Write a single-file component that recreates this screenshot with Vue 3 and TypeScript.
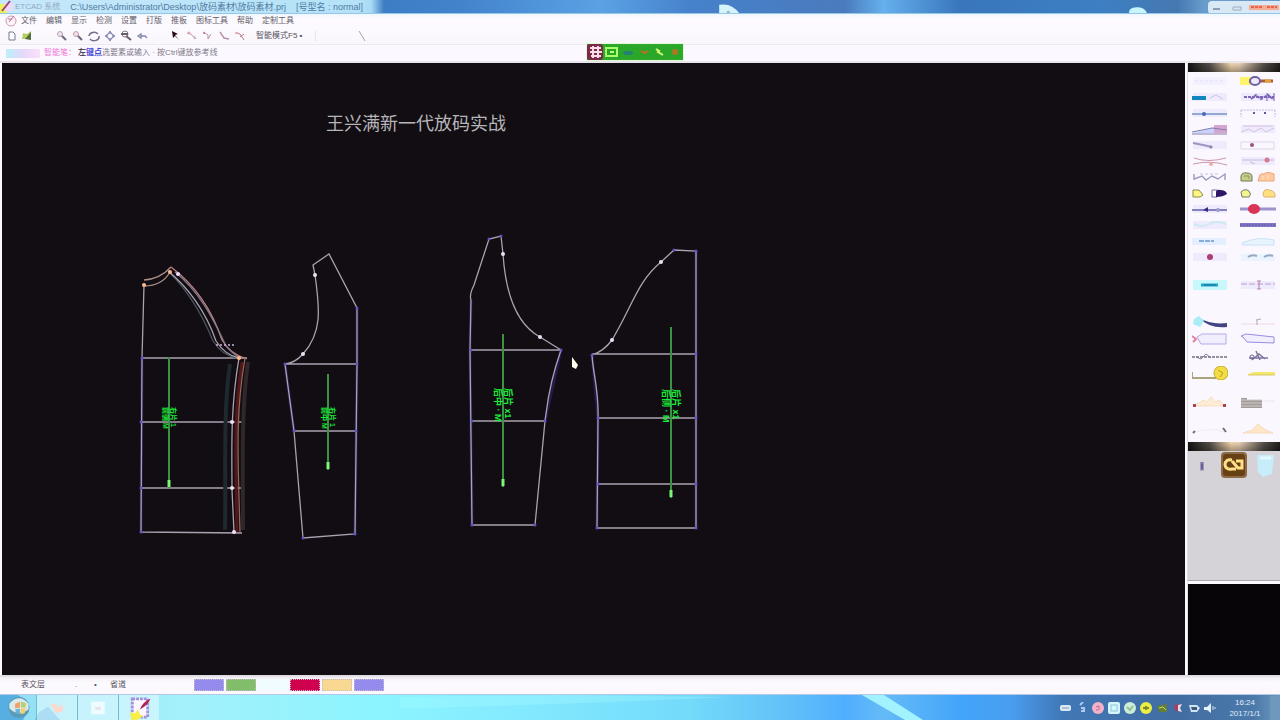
<script setup lang="ts">
interface Item { label: string; art: string }

const menus: string[] = ['文件', '编辑', '显示', '检测', '设置', '打版', '推板', '图标工具', '帮助', '定制工具']

const fileTools: Item[] = [
  { label: '新建', art: '<path d="M3 2h4l2 2v6H3z" fill="#fff" stroke="#77798f"/>' },
  { label: '打开', art: '<path d="M1 9l1-6 4 1 4-3v8z" fill="#b5cf62"/><path d="M4 9l6-7v8z" fill="#526c3c"/>' },
]
const viewTools: Item[] = [
  { label: '放大', art: '<path d="M5 5l5 5" stroke="#6b6a76" stroke-width="2"/><circle cx="4" cy="4" r="2.5" fill="#eee4ec" stroke="#b7a5b5"/>' },
  { label: '缩小', art: '<path d="M5 5l5 5" stroke="#68687c" stroke-width="2"/><circle cx="4" cy="4" r="2.5" fill="#f6dfe4" stroke="#c5a0aa"/>' },
  { label: '刷新', art: '<path d="M1 6a5 4 0 0 1 9-2M11 6a5 4 0 0 1-9 3" fill="none" stroke="#72708a" stroke-width="1.5"/>' },
  { label: '平移', art: '<path d="M6 1l2 3-2-1-2 1zM6 11l2-3-2 1-2-1zM1 6l3-2-1 2 1 2zM11 6L8 4l1 2-1 2z" fill="#8a8eb8" stroke="#8a8eb8"/>' },
  { label: '全屏', art: '<circle cx="5" cy="4" r="3" fill="none" stroke="#85818e"/><path d="M1 4h7M6 6l5 4" stroke="#6d5d6a" stroke-width="2"/>' },
  { label: '撤销', art: '<path d="M2 6l3-2v4zM5 6h4l2 2" fill="none" stroke="#7c84ab" stroke-width="1.3"/>' },
]
const editTools: Item[] = [
  { label: '选择', art: '<path d="M2 1l6 3-3 1 4 5-4-4-2 2z" fill="#2a0718"/>' },
  { label: '点捕捉', art: '<path d="M1 3l4 1 4 5M8 6l2 3" stroke="#b3a3b6" fill="none"/><circle cx="3" cy="3" r="1.5" fill="#e5a8aa"/>' },
  { label: '线捕捉', art: '<path d="M1 2l5 3M6 5v4l3-5" stroke="#b998ac" fill="none"/><circle cx="2" cy="3" r="1" fill="#dc6d89"/>' },
  { label: '裁剪', art: '<path d="M2 2l4 6 5 1" stroke="#b892a8" fill="none" stroke-width="1.4"/>' },
  { label: '移动', art: '<path d="M1 3l5 1 4 6M6 7l4-3" stroke="#b57c8b" fill="none"/><circle cx="3" cy="3" r="1.3" fill="#edabb3"/>' },
]

const haze = '<rect x="1" y="3" width="34" height="8" fill="#eeebfd"/>'
const wave = haze + '<path d="M1 10l8-3 5 3 7-4 5 4 8-4M3 4h30" stroke="#d8bfe2" fill="none"/>'
const groupA: Item[] = [
  { label: '任意文字', art: '<rect x="1" y="3" width="34" height="8" fill="#f4f1fe"/><path d="M3 7h30" stroke="#e4dff7" stroke-dasharray="3 2"/>' },
  { label: '修正', art: '<path d="M0 3h13v8H0z" fill="#fff36a"/><path d="M9 7h24" stroke="#a75b41" stroke-width="3"/><path d="M25 7h6" stroke="#e4a332" stroke-width="3"/><ellipse cx="15" cy="7" rx="5" ry="4" fill="#eee9ff" stroke="#6960a2" stroke-width="2"/>' },
  { label: '点打断', art: haze + '<path d="M0 8h14" stroke="#1187bd" stroke-width="4"/><path d="M18 8l6-3 7 4" fill="none" stroke="#d3c0e4"/>' },
  { label: '平行线', art: haze + '<path d="M4 7h30M11 9l5-4 5 4 7-4 5 4" fill="none" stroke="#7d66b8" stroke-width="2" stroke-dasharray="3 1"/><path d="M27 3v8M34 3v8" stroke="#7959b5"/>' },
  { label: '等分线', art: haze + '<path d="M0 8h35" stroke="#94a8d6" stroke-width="2"/><circle cx="12" cy="8" r="2" fill="#4169b5"/>' },
  { label: '等分点', art: '<path d="M1 4h34M1 4v7M35 4v7" stroke="#c4b6df" stroke-dasharray="2 1"/><path d="M13 7h2M24 7h2" stroke="#61579b" stroke-width="2"/>' },
  { label: '角度线', art: '<path d="M0 11L22 5v6z" fill="#cad2fc"/><path d="M22 3h13v8H22z" fill="#d4a6cf"/><path d="M0 10l20-4 15 2M0 12h35" stroke="#857cae" fill="none"/>' },
  { label: '波浪线', art: wave },
  { label: '曲线', art: haze + '<path d="M1 5l10 2 9 2" stroke="#a095c2" fill="none" stroke-width="2"/><circle cx="19" cy="9" r="1.5" fill="#987cad"/>' },
  { label: '点', art: '<path d="M1 4h33v7H1z" fill="none" stroke="#e0d5ef"/><circle cx="12" cy="7" r="2" fill="#96557e"/>' },
  { label: '圆角', art: '<path d="M2 4q14 5 32 0M1 10q18-4 34 1" fill="none" stroke="#ca97ad"/><circle cx="19" cy="10" r="2" fill="#efaaa8"/>' },
  { label: '对称', art: haze + '<path d="M2 6h32M10 8l5 2" stroke="#c9b7d6"/><circle cx="27" cy="6" r="2.5" fill="#d97894"/>' },
  { label: '多段线', art: '<path d="M2 4v6M2 9l8-3 4 4 6-4 6 3 7-5v6" fill="none" stroke="#9d9bc0" stroke-width="1.4"/><path d="M8 4h20" stroke="#c4c2de" stroke-dasharray="3 2"/>' },
  { label: '转换', art: '<path d="M1 6q1-4 6-3 5 0 5 4v4H1z" fill="#c6ce85" stroke="#71785e"/><path d="M4 6h5v3" fill="none" stroke="#8b9270"/><path d="M19 8q0-5 5-4 3-3 10 0v7H18z" fill="#ffc99c" stroke="#eaa583"/><path d="M23 6v4M28 5v5" stroke="#ffe5cd"/>' },
  { label: '复制', art: '<path d="M1 4h6l4 5-3 2H1z" fill="#fff681" stroke="#8c8951"/><path d="M20 4h5v7h-5z" fill="#fff" stroke="#726ca0"/><path d="M24 7q0-4 4-3 6 0 7 4-4 3-11 3z" fill="#2e1766"/>' },
  { label: '镜像', art: '<path d="M1 6q4-4 8-1 3 3 0 6H2z" fill="#f3f48f" stroke="#777a66"/><path d="M23 8q1-6 6-4 7 1 6 7H24z" fill="#ffe07e" stroke="#ddb26c"/>' },
  { label: '长度', art: haze + '<path d="M0 8h35" stroke="#8582c2" stroke-width="2"/><path d="M11 8l5-3v5z" fill="#392a82"/><circle cx="26" cy="8" r="2" fill="#9c9bc7"/>' },
  { label: '标记', art: '<path d="M0 7h36" stroke="#9f93cf" stroke-width="3"/><ellipse cx="14" cy="7" rx="6" ry="5" fill="#da3456"/>' },
  { label: '剪开', art: haze + '<path d="M2 6q8 4 15 0t17 0" stroke="#cdeaf1" fill="none" stroke-width="2"/>' },
  { label: '测量', art: '<rect x="0" y="5" width="36" height="4" fill="#8078c6"/><path d="M0 7h36" stroke="#6256a1" stroke-dasharray="2 1"/>' },
  { label: '纱向', art: '<rect y="4" width="34" height="7" fill="#e3effe"/><path d="M7 7h15" stroke="#87acd7" stroke-width="2" stroke-dasharray="5 1"/>' },
  { label: '旋转', art: '<path d="M2 9q16-7 32-3v5H2z" fill="#e7f4ff" stroke="#c9e3f4"/>' },
  { label: '打孔', art: haze + '<circle cx="18" cy="7" r="3" fill="#ad3c77"/>' },
  { label: '拼接', art: '<rect x="1" y="4" width="34" height="7" fill="#eaf3fe"/><path d="M8 7q4-3 9-1M24 7q4-3 9-1" fill="none" stroke="#95a9c4" stroke-width="2"/>' },
]
const groupB: Item[] = [
  { label: '缝边', art: '<rect x="1" y="2" width="34" height="10" fill="#c8f8fc"/><path d="M9 7h17" stroke="#21a6cd" stroke-width="3"/><path d="M12 7h12" stroke="#176b98"/>' },
  { label: '拉链', art: haze + '<path d="M1 6h34" stroke="#d5c2e6" stroke-width="2" stroke-dasharray="6 2"/><path d="M17 3h4M19 3v8M17 11h4" stroke="#b37db1"/>' },
]
const groupC: Item[] = [
  { label: '刷子', art: '<path d="M7 3q12 7 28 5v4q-17 2-28-9z" fill="#434583"/><path d="M2 4l5-3 5 5-4 6-7-3z" fill="#a9edf5"/>' },
  { label: '刀口', art: '<path d="M1 9h34" stroke="#efdbe5"/><path d="M16 5l5-1M17 5v5" stroke="#b3a5b6"/>' },
  { label: '前片', art: '<path d="M5 5l5-3h24v10H9z" fill="#f1eefe" stroke="#b4abe6"/><path d="M0 4l4 3-3 3" stroke="#e97f9e" fill="none" stroke-width="2"/>' },
  { label: '后片', art: '<path d="M1 4l5-2 28 3v6l-27-1-4-5z" fill="#f1eefe" stroke="#978ce0"/>' },
  { label: '线型', art: '<path d="M0 8h36" stroke="#9692a0" stroke-width="2" stroke-dasharray="3 1"/><path d="M4 8l5 2 5-5 5 4" fill="none" stroke="#7f7b95"/>' },
  { label: '剪刀', art: '<path d="M9 9h19M16 2l4 9M12 11l7-6 6 5" fill="none" stroke="#7d75a0" stroke-width="1.5"/><circle cx="12" cy="8" r="2" fill="none" stroke="#6e6595"/>' },
  { label: '卷尺', art: '<path d="M0 6v6h24" fill="none" stroke="#a9a47c" stroke-width="2"/><circle cx="29" cy="7" r="7" fill="#f2dd43" stroke="#c4a82e"/><path d="M26 4l5 3-3 4" stroke="#b99d27" fill="none"/>' },
  { label: '直尺', art: '<path d="M8 8l6-2h21v3H9z" fill="#f4e86b"/><path d="M8 9h27" stroke="#d6c968"/>' },
]
const groupD: Item[] = [
  { label: '省道', art: '<path d="M4 8q5-1 7-4l4 2 4-5 4 5 5-2 3 6H4z" fill="#ffecd5" stroke="#f6ddc3"/><path d="M1 8h3v3H1zM31 8h3v3h-3z" fill="#a84652"/>' },
  { label: '表格', art: '<path d="M1 2h6v2h15v8H1z" fill="#a49c9b"/><path d="M1 4h21M1 7h21M1 10h21" stroke="#cfcaca"/><path d="M23 5h12" stroke="#e9e5ea"/>' },
  { label: '展开', art: '<path d="M3 10q15-5 29 0" fill="none" stroke="#f4ebf2"/><path d="M1 11l2-2M31 6l3 4" stroke="#786c80" stroke-width="2"/>' },
  { label: '褶', art: '<path d="M3 11l9-3 6-6 6 5 9 4z" fill="#ffe6c9" stroke="#f5dabd"/>' },
]
const toolGroups = [
  { name: 'a', items: groupA }, { name: 'b', items: groupB },
  { name: 'c', items: groupC }, { name: 'd', items: groupD },
]

const swatches = ['violet', 'green', 'aqua', 'crimson', 'yellow', 'violet']

const trayIcons: Item[] = [
  { label: '键盘', art: '<rect y="3" width="11" height="6" rx="2" fill="#dce9f5"/><path d="M2 6h7" stroke="#7c97b4"/>' },
  { label: '语言', art: '<path d="M4 3l3-3M5 6h3v3H5" stroke="#a8cbef" stroke-width="2" fill="none"/>' },
  { label: '音乐', art: '<circle cx="6" cy="6" r="6" fill="#f1b2c9"/><path d="M4 5l3-1v4M6 8H4" stroke="#c5658d" fill="none"/>' },
  { label: '同步', art: '<rect width="12" height="12" rx="2" fill="#d5f5fd"/><rect x="3" y="3" width="6" height="6" fill="none" stroke="#8dc8dc"/>' },
  { label: '安全', art: '<circle cx="6" cy="6" r="6" fill="#cceed8"/><path d="M3 5l3 3 3-4" stroke="#8fc29c" stroke-width="2" fill="none"/>' },
  { label: '警告', art: '<circle cx="6" cy="6" r="6" fill="#e9ef44"/><path d="M3 6h6M6 4v4" stroke="#858731" stroke-width="2"/>' },
  { label: '显卡', art: '<path d="M1 4l10-2v8H3z" fill="#657e35"/><path d="M3 6l4-1 3 3" stroke="#c1db68" fill="none"/>' },
  { label: '播放', art: '<path d="M2 3l6-1v8L3 8z" fill="#a83e5c"/><path d="M6 3l4-1-2 4 2 4-4-1z" fill="#e3ddec"/>' },
  { label: '网络', art: '<path d="M1 3h8l3 3-3 4H3z" fill="#d0e4f2"/><path d="M3 5h6v3H4z" fill="#3a5a80"/>' },
  { label: '音量', art: '<path d="M0 5h3l4-4v10L3 8H0z" fill="#e4f2fb"/><path d="M9 4v4M11 5v2" stroke="#d2e7f7"/>' },
]

const markers = [
  { x: 169, y1: 357, y2: 488, ty: 407, a: '前侧 M', b: '右片 1', s: 7 },
  { x: 328, y1: 374, y2: 470, ty: 407, a: '前中 M', b: '右片 1', s: 7 },
  { x: 503, y1: 334, y2: 487, ty: 388, a: '后中 · M', b: '后片 x1', s: 9 },
  { x: 671, y1: 327, y2: 498, ty: 389, a: '后侧 · M', b: '后片 x1', s: 9 },
]
const bluePoints: [number, number][] = [
  [142, 358], [141, 422], [141, 488], [141, 532], [285, 364], [294, 431], [303, 538], [355, 534], [356, 431], [357, 364], [357, 308],
  [471, 350], [472, 421], [472, 525], [535, 525], [545, 421], [561, 350], [489, 239], [501, 236], [592, 355], [598, 418], [598, 484],
  [597, 528], [696, 528], [696, 484], [696, 418], [696, 354], [696, 251], [674, 250],
]
const whitePoints: [number, number][] = [[315, 275], [303, 354], [503, 254], [540, 337], [661, 262], [612, 340], [232, 422], [232, 488], [234, 532], [178, 274]]
const orangePoints: [number, number][] = [[144, 285], [170, 272], [239, 358]]
</script>

<template>
  <div class="app">
    <header class="titlebar">
      <svg class="cloud first" viewBox="0 0 26 12" aria-hidden="true"><path d="M0 12V1q15-3 25 11z" fill="#d3f4fa" /><circle cx="11" cy="10" r="2" fill="#92b9c5" /></svg>
      <svg class="cloud second" viewBox="0 0 26 12" aria-hidden="true"><path d="M1 12q-1-8 9-8 10-1 13 8z" fill="#c6f5fc" /></svg>
      <svg class="logo" viewBox="0 0 14 14" aria-hidden="true"><path d="M0 4h7v10H0z" fill="#eff05e" /><path d="M5 3h8v8H5z" fill="#eed8ff" /><path d="M2 11L10 1" stroke="#9e417a" stroke-width="2" /></svg>
      <span class="app-name">ETCAD 系统</span>
      <span class="path">C:\Users\Administrator\Desktop\放码素材\放码素材.prj</span>
      <span class="path">[号型名 : normal]</span>
      <div class="window-buttons">
        <button aria-label="最小化"><svg viewBox="0 0 20 12"><path d="M5 8h7" stroke="#8aa0b8" stroke-width="2" /></svg></button>
        <button aria-label="还原"><svg viewBox="0 0 20 12"><path d="M5 6h8v3H5z" fill="none" stroke="#9dacc2" /></svg></button>
        <button class="close" aria-label="关闭"><svg viewBox="0 0 30 12"><path d="M0 4h30v5H0z" fill="#f5ad98" /><path d="M2 6h12M18 6h10" stroke="#e8634a" stroke-width="2" stroke-dasharray="3 1" /></svg></button>
      </div>
    </header>

    <nav class="menubar">
      <svg class="menu-logo" viewBox="0 0 14 12" aria-hidden="true"><circle cx="7" cy="6" r="5" fill="#fff4f8" stroke="#cf98b3" /><path d="M5 7l5-6M4 4h4" stroke="#ac7398" fill="none" /></svg>
      <button v-for="m in menus" :key="m">{{ m }}</button>
    </nav>

    <div class="toolbar">
      <div class="tools file"><button v-for="t in fileTools" :key="t.label" :aria-label="t.label"><svg viewBox="0 0 12 12" v-html="t.art" /></button></div>
      <div class="tools view"><button v-for="t in viewTools" :key="t.label" :aria-label="t.label"><svg viewBox="0 0 12 12" v-html="t.art" /></button></div>
      <div class="tools edit"><button v-for="t in editTools" :key="t.label" :aria-label="t.label"><svg viewBox="0 0 12 12" v-html="t.art" /></button></div>
      <button class="mode">智能模式F5 <b>•</b></button>
      <svg class="slash" viewBox="0 0 8 12" aria-hidden="true"><path d="M1 1l6 10" stroke="#a5a2aa" /></svg>
    </div>

    <div class="hints">
      <span class="blush"></span>
      <span class="pink">智能笔：</span>
      <span><b>左</b><b class="blue">键点</b>选要素或输入 · 按Ctrl键放参考线</span>
    </div>

    <div class="ime" role="toolbar" aria-label="输入法">
      <svg viewBox="0 0 96 16" aria-hidden="true">
        <rect width="96" height="16" fill="#2aa728" /><rect width="16" height="16" rx="3" fill="#7d2948" />
        <path d="M3 4h11M3 8h12M4 12h10M6 2v12M11 2v12" stroke="#f9dce8" stroke-width="2" />
        <path d="M19 4h11v8H19z" fill="none" stroke="#a9ff6b" stroke-width="2" /><path d="M23 8h4" stroke="#baff7e" stroke-width="2" />
        <ellipse cx="41" cy="9" rx="5" ry="2" fill="#257e78" /><path d="M54 7l4 2 3-2" stroke="#bf6c29" fill="none" stroke-width="2" />
        <path d="M69 5l3 2-1 1 5 3" stroke="#d5fb76" stroke-width="2" fill="none" /><circle cx="88" cy="8" r="3" fill="#a97a21" />
        <path d="M18 1h77v14H18z" fill="none" stroke="#49b73c" stroke-dasharray="1 2" />
      </svg>
    </div>

    <main class="workspace">
      <section class="canvas" aria-label="裁片画布">
        <svg viewBox="2 63 1183 612" preserveAspectRatio="xMinYMin meet">
          <text class="headline" x="326" y="130">王兴满新一代放码实战</text>

          <g class="halo">
            <path d="M142 358L141 532M357 308V364L355 534M294 431L285 364M471 300L470 350L472 525M561 350L545 421M696 251V528M597 528L598 418L592 355" />
          </g>
          <g class="outline">
            <path d="M144 285L142 358L141 532L242 533M141 358H247M141 422H243M141 488H243" />
            <path d="M144 280Q160 279 171 267M144 286Q162 286 170 272" stroke="#a88f87" />
            <path d="M171 267C195 285 212 310 222 340Q230 354 247 359" stroke="#bd7f82" />
            <path d="M170 273C186 289 202 314 213 341Q222 355 236 358" stroke="#47535a" />
            <path d="M168 271C188 287 206 312 216 341Q225 355 239 358" />
            <path d="M175 272C199 291 213 318 226 346Q233 354 239 357" stroke="#857b89" />
            <path d="M216 345h18" stroke="#ceb0d9" stroke-dasharray="2 2" />
            <path d="M242 362C233 420 236 460 237 532" stroke="#541719" stroke-width="3" />
            <path d="M230 364C223 410 226 470 225 530" stroke="#1d292f" stroke-width="4" />
            <path d="M248 362C241 410 243 470 243 530" stroke="#30272a" stroke-width="4" />
            <path d="M239 358C230 410 232 452 232 490L234 532" />
            <path d="M245 358C235 415 238 460 240 532" stroke="#946859" />
            <path d="M313 265L329 254L357 308V364L355 534L303 538L294 431L285 364Q295 363 303 354C322 333 320 310 315 275ZM285 364H357M294 431H356" />
            <path d="M471 300Q469 295 474 285L489 239L501 236L503 254C506 300 520 326 540 337L561 350C547 390 547 410 545 421L535 525H472L470 350ZM471 350H561M472 421H545" />
            <path d="M674 250L696 251V528H597L598 418C599 390 593 374 592 355Q604 351 612 340C633 305 637 282 661 262ZM592 354H696M598 418H696M598 484H696" />
          </g>

          <g class="marker" v-for="m in markers" :key="m.x">
            <path :d="`M${m.x} ${m.y1}V${m.y2}`" />
            <path :d="`M${m.x} ${m.y2 - 8}v7`" class="tip" />
            <text :transform="`translate(${m.x + 2} ${m.ty}) rotate(90)`" :font-size="m.s">{{ m.b }}</text>
            <text :transform="`translate(${m.x - m.s + 1} ${m.ty}) rotate(90)`" :font-size="m.s">{{ m.a }}</text>
          </g>

          <circle v-for="(p, i) in bluePoints" :key="'b' + i" :cx="p[0]" :cy="p[1]" r="1.5" fill="#5f53c4" />
          <circle v-for="(p, i) in whitePoints" :key="'w' + i" :cx="p[0]" :cy="p[1]" r="2" fill="#efdff5" />
          <circle v-for="(p, i) in orangePoints" :key="'o' + i" :cx="p[0]" :cy="p[1]" r="2" fill="#ffb98b" />
          <path d="M572 357l6 8-2 4-4-2z" fill="#fffff0" />
        </svg>
      </section>

      <aside class="side">
        <div class="side-head"></div>
        <div class="palette">
          <div v-for="g in toolGroups" :key="g.name" class="group" :class="g.name">
            <button v-for="t in g.items" :key="t.label" :aria-label="t.label"><svg viewBox="0 0 36 14" v-html="t.art" /></button>
          </div>
        </div>
        <div class="side-head"></div>
        <div class="layers">
          <button aria-label="信息"><svg viewBox="0 0 28 28"><path d="M14 11v8" stroke="#66609b" stroke-width="3" /><path d="M12 12h4M12 19h4" stroke="#9791b4" /></svg></button>
          <button aria-label="缝边刷新"><svg viewBox="0 0 28 28"><rect x="1" y="1" width="26" height="26" rx="4" fill="#8c6a45" /><rect x="3" y="3" width="22" height="22" rx="3" fill="#684016" /><path d="M12 9q-7-1-7 5 1 5 7 4h4M12 10l6 7M16 10h6v7h-5" fill="none" stroke="#ffe187" stroke-width="3" /></svg></button>
          <button aria-label="裁片"><svg viewBox="0 0 28 28"><path d="M5 4h17l-2 19-9 3-5-5z" fill="#c6edf9" /><path d="M8 7h11" stroke="#e4f8ff" stroke-width="3" /></svg></button>
        </div>
        <div class="preview"></div>
      </aside>
    </main>

    <div class="statusbar">
      <span class="layer-name">表文层</span>
      <span class="dots">.</span>
      <span class="dots">•</span>
      <span class="smart">省道</span>
      <div class="swatches"><button v-for="(s, i) in swatches" :key="i" :class="s" :aria-label="'颜色 ' + (i + 1)"></button></div>
    </div>

    <footer class="taskbar">
      <svg class="sky" viewBox="0 0 1280 26" preserveAspectRatio="none" aria-hidden="true">
        <path d="M0 0h18q15 9 5 26H0zM39 18l9-6 12 14H35z" fill="#3f9bd9" opacity=".7" />
        <path d="M400 14Q560 10 730 2L560 0 400 2z" fill="#abffff" opacity=".3" />
        <path d="M862 0h22l39 26h-18z" fill="#a2f2ff" />
      </svg>
      <button class="start" aria-label="开始"><svg viewBox="0 0 28 26"><circle cx="15" cy="13" r="11" fill="#5b9ab9" /><path d="M5 9q10-11 20 0v6q-10 8-20-1z" fill="#dbeae9" /><path d="M11 9l5-2v6l-5 1z" fill="#f0a06b" /><path d="M17 7l5 1v5h-5z" fill="#b7cf77" /><path d="M11 15l5-1v6l-4-1z" fill="#67b3db" /><path d="M17 14h5l-1 5-4 1z" fill="#f4ce66" /></svg></button>
      <button class="task" aria-label="浏览器"><svg viewBox="0 0 28 26"><path d="M7 9h6l2 4 5-3v7l-7 2z" fill="#ffd8ca" /></svg></button>
      <button class="task" aria-label="文件夹"><svg viewBox="0 0 28 26"><path d="M7 7h14v13H7z" fill="#effcff" /><path d="M11 14h6" stroke="#e9e2e8" stroke-width="3" /></svg></button>
      <button class="task" aria-label="打版系统"><svg viewBox="0 0 28 26"><path d="M7 4h16v19H7z" fill="#fbf7ff" stroke="#a391db" stroke-width="3" stroke-dasharray="3 1" /><path d="M15 15q3-8 11-11-3 7-11 11z" fill="#af2050" /><path d="M5 18l5 1 3-4 2 5 3 2-6 4H6z" fill="#f7ef44" /></svg></button>
      <div class="tray"><button v-for="t in trayIcons" :key="t.label" :aria-label="t.label"><svg viewBox="0 0 12 12" v-html="t.art" /></button></div>
      <time class="clock"><span>16:24</span><span>2017/1/1</span></time>
      <button class="desktop" aria-label="显示桌面"></button>
    </footer>
  </div>
</template>

<style>
body { background: #f9f6fd; }
</style>

<style scoped>
.app { position: relative; display: flex; flex-direction: column; min-height: 100vh; overflow: hidden; font-family: "Liberation Sans", "Noto Sans CJK SC", sans-serif; font-size: 8px; line-height: 12px; color: #77717f; background: #fbf8ff; }
* { box-sizing: border-box; }
button { padding: 0; border: 0; background: none; font: inherit; color: inherit; white-space: nowrap; }
svg { display: block; }

.titlebar { position: relative; display: flex; align-items: center; gap: 10px; height: 14px; color: #4f7ba2; background: linear-gradient(90deg, #c6e8fa 0, #b4e2f8 28%, #a9daf4 29%, #3d7dc4 30%, #4383cd 36%, #5aa2e4 47%, #4681cb 54%, #4a7bbd 66%, #65b0ed 69%, #3976bc 75%, #3d7fc3 86%, #4578b1 92%, #679ccc 94%); white-space: nowrap; }
.titlebar::after { content: ""; position: absolute; inset: auto 0 0; height: 1px; background: #99c5e8; }
.logo { width: 14px; height: 14px; margin-right: -9px; }
.app-name { color: #91a9c1; }
.path { font-size: 9px; }
.cloud { position: absolute; bottom: 0; width: 26px; height: 10px; }
.first { left: 56%; }
.second { left: 88%; }
.window-buttons { display: flex; height: 13px; margin-left: auto; background: #d8e8f4; border-radius: 4px 0 0 4px; }
.window-buttons button, .window-buttons svg { width: 20px; height: 12px; }
.window-buttons .close, .window-buttons .close svg { width: 32px; }

.menubar { display: flex; align-items: center; gap: 9px; height: 14px; padding-left: 4px; background: linear-gradient(#eef7ff, #fcf9ff 4px); color: #625c68; }
.menu-logo { width: 14px; height: 12px; margin-right: -6px; }

.toolbar { display: flex; align-items: center; height: 17px; padding-left: 6px; background: linear-gradient(#fcf9ff, #faf7fc); border-bottom: 1px solid #eee8f0; }
.tools { display: flex; gap: 4px; }
.tools svg { width: 12px; height: 12px; }
.file { width: 50px; gap: 3px; }
.view { width: 114px; }
.edit { width: 86px; gap: 4px; }
.mode { width: 60px; text-align: left; color: #57515d; border-right: 1px solid #ebe5ee; }
.slash { width: 8px; height: 12px; margin-left: 42px; }

.hints { display: flex; align-items: center; height: 18px; padding-left: 6px; border-bottom: 2px solid #e9e4ec; color: #827b88; white-space: nowrap; }
.blush { width: 34px; height: 9px; margin-right: 4px; background: linear-gradient(90deg, #bceff9, #e5d7fa, #fbe0fa); }
.pink { color: #ed78d5; width: 34px; }
.hints b { color: #53485e; }
.hints .blue { color: #4947d6; }

.ime { position: absolute; top: 43px; left: 46%; width: 98px; padding: 1px; background: #e2f7d8; transform: translateX(-3px); }
.ime svg { width: 96px; height: 16px; }

.workspace { flex: 1; display: flex; min-height: 0; }
.canvas { flex: 1; min-width: 0; margin: 0 2px 0 2px; background: #110d12; }
.canvas svg { width: 100%; }
.headline { font: 18px "Noto Sans CJK SC", sans-serif; fill: #b7b5b8; }
.halo { fill: none; stroke: #2b2166; stroke-width: 3; opacity: .7; }
.outline { fill: none; stroke: #aaa2b1; stroke-width: 1.3; }
.marker path { stroke: #3b9144; stroke-width: 2; }
.marker .tip { stroke: #7ef578; stroke-width: 3; }
.marker text { fill: #1aed39; font-family: "Liberation Sans", "Noto Sans CJK SC", sans-serif; font-weight: bold; }

.side { display: flex; flex-direction: column; flex: 0 0 93px; border-left: 1px solid #e3dde6; }
.side-head { height: 9px; background: linear-gradient(#fff0, #0005), linear-gradient(90deg, #171414, #55504c 24%, #f5d7ad 47%, #ead2b6 56%, #56504c 82%, #211d1c); }
.palette { display: flex; flex-direction: column; padding: 1px 2px 0 4px; background: #faf7ff; }
.group { display: grid; grid-template-columns: 36px 36px; column-gap: 12px; grid-auto-rows: 16px; align-items: center; }
.group svg { width: 36px; height: 14px; }
.b { margin-top: 12px; }
.c { margin-top: 20px; grid-auto-rows: 17px; }
.d { margin-top: 9px; grid-auto-rows: 26px; }
.layers { flex: 0 0 130px; display: flex; align-items: flex-start; gap: 4px; background: #d5d2d8; border-bottom: 1px solid #aaa6ad; }
.layers svg { width: 28px; height: 28px; }
.preview { flex: 1; margin: 3px 0 0; background: #080508; }

.statusbar { display: flex; align-items: center; height: 19px; padding-left: 21px; color: #5b5560; background: linear-gradient(#d9d4dc, #f4f0f6 3px, #fcfaff 8px, #fcf8fd); }
.layer-name { width: 54px; }
.dots { width: 19px; }
.smart { width: 80px; margin-left: -3px; }
.swatches { display: flex; gap: 2px; margin-left: 4px; }
.swatches button { width: 30px; height: 12px; border: 1px dotted #c4bcca; }
.violet { background: #958bec; }
.green { background: #82bd69; }
.swatches .aqua { background: #f0fcff; border-color: #f0fcff; }
.crimson { background: #cf004e; }
.yellow { background: #f9d991; }

.taskbar { position: relative; display: flex; align-items: center; height: 26px; background: linear-gradient(90deg, #91ddf5 0, #a4f1fb 14%, #8bf4ff 30%, #84eaff 40%, #73dafa 54%, #63c2f8 61%, #50aeff 66%, #65bbf7 69%, #43a5fa 75%, #499df0 79%, #4177b6 83%, #426da3 92%, #4b79aa 98%, #6c99bd); border-top: 1px solid #b5c9e6; }
.sky { position: absolute; inset: 0; width: 100%; height: 100%; }
.taskbar button { position: relative; }
.start { width: 36px; }
.start svg, .task svg { width: 28px; height: 25px; margin: auto; }
.taskbar .task { width: 41px; height: 25px; background: #e4fbff99; border-left: 1px solid #71bbd2; border-right: 1px solid #c6f7ff; }
.tray { display: flex; gap: 4px; margin-left: auto; }
.tray svg { width: 12px; height: 12px; }
.clock { position: relative; width: 50px; margin-left: 4px; display: flex; flex-direction: column; align-items: center; font-size: 8px; line-height: 11px; color: #e0edf8; }
.desktop { width: 10px; height: 24px; background: #6f98bd; }
</style>
